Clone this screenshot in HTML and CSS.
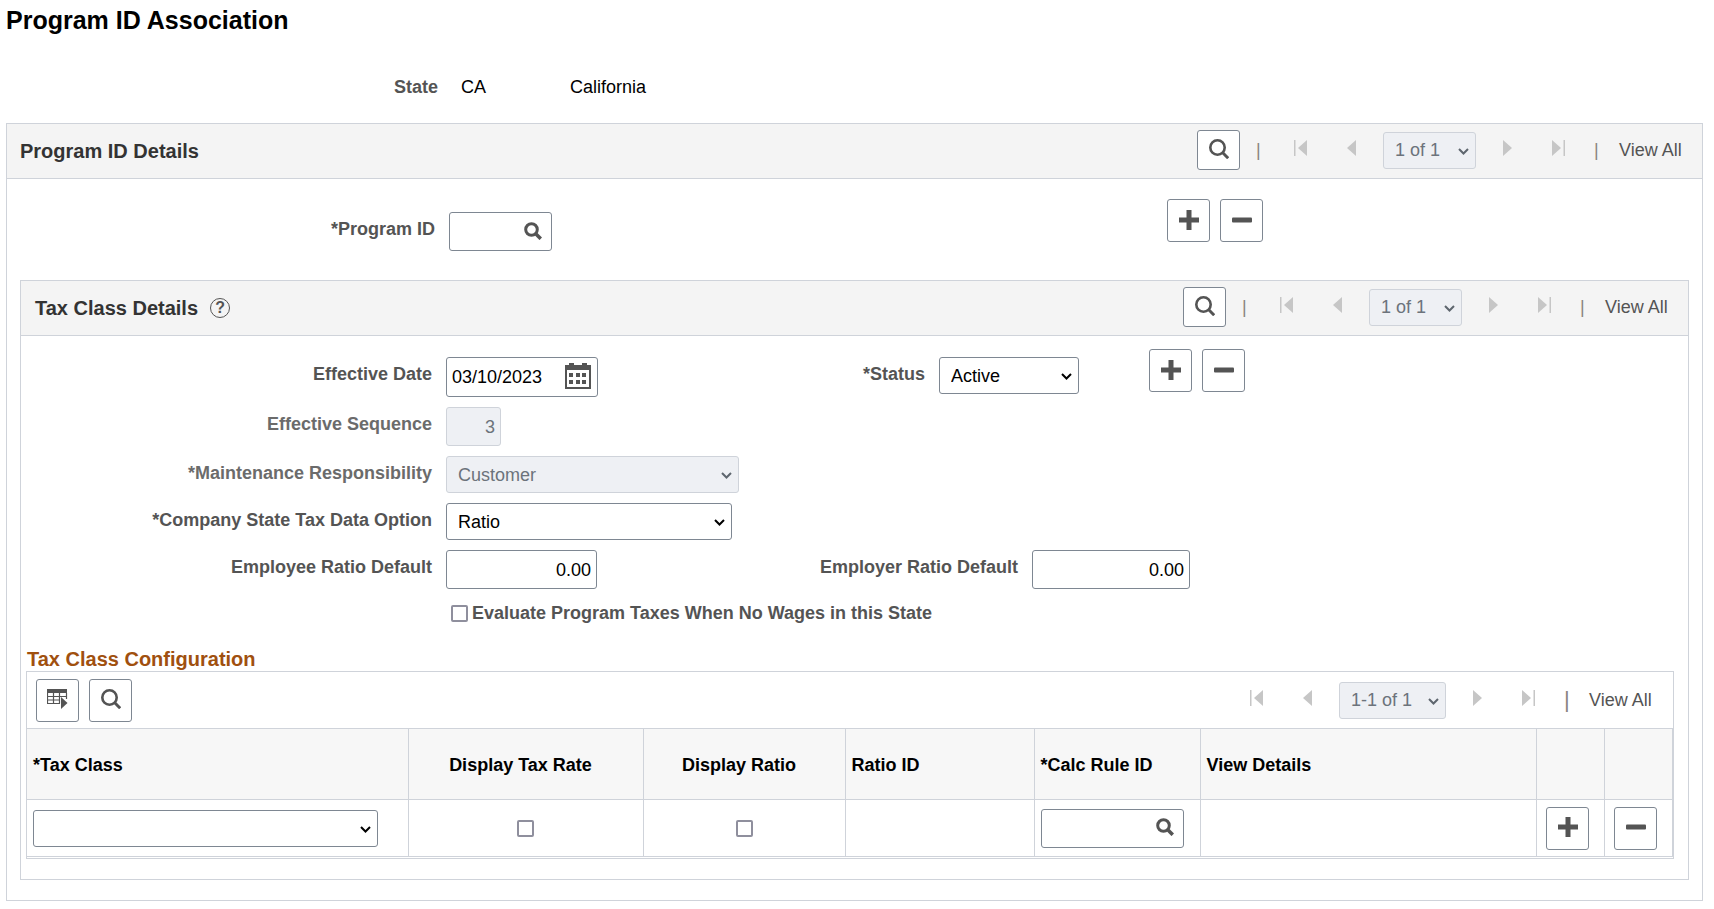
FILE: index.html
```html
<!DOCTYPE html>
<html lang="en">
<head>
    <meta charset="UTF-8">
    <meta name="viewport" content="width=device-width, initial-scale=1.0">
    <title>Program ID Association</title>
    <link rel="stylesheet" href="styles.css">
</head>
<body>
    <!-- shared icons -->
    <svg class="sprite" aria-hidden="true">
        <symbol id="i-search" viewBox="0 0 20 20"><circle cx="8.500" cy="8.500" r="7.200" fill="none" stroke="currentColor" stroke-width="2.600"/><path d="M13.500 13.500l5.700 5.700" stroke="currentColor" stroke-width="3" fill="none"/></symbol>
        <symbol id="i-lookup" viewBox="0 0 18 18"><circle cx="7.500" cy="7.500" r="5.800" fill="none" stroke="currentColor" stroke-width="3"/><path d="M11.500 11.500l5.300 5.300" stroke="currentColor" stroke-width="3.600" fill="none"/></symbol>
        <symbol id="i-plus" viewBox="0 0 20 20"><path d="M7.500 0h5v7.500H20v5h-7.500V20h-5v-7.500H0v-5h7.500z" fill="currentColor"/></symbol>
        <symbol id="i-minus" viewBox="0 0 20 20"><rect y="7.500" width="20" height="5" rx="1" fill="currentColor"/></symbol>
        <symbol id="i-first" viewBox="0 0 13 16"><path d="M0 0h1.500v16H0zM13 0v16L4 8z" fill="currentColor"/></symbol>
        <symbol id="i-prev" viewBox="0 0 9 16"><path d="M9 0v16L0 8z" fill="currentColor"/></symbol>
        <symbol id="i-next" viewBox="0 0 9 16"><path d="M0 0v16l9-8z" fill="currentColor"/></symbol>
        <symbol id="i-last" viewBox="0 0 13 16"><path d="M11.500 0H13v16h-1.500zM0 0v16l9-8z" fill="currentColor"/></symbol>
        <symbol id="i-calendar" viewBox="0 0 26 26"><path d="M0 2h4V0h5v2h8V0h5v2h4v24H0zM2 7v17h22V7z" fill="currentColor" fill-rule="evenodd"/><path d="M4 10h4v4H4zM11 10h4v4h-4zM17 10h4v4h-4zM4 17h4v4H4zM11 17h4v4h-4zM17 17h4v4h-4z" fill="currentColor"/></symbol>
        <symbol id="i-grid" viewBox="0 0 21 20"><path d="M0 0h20v4H0z" fill="currentColor"/><path d="M.500 4v10.500H13M.500 7.500h19M.500 11H13M6.500 4v10.500M12.500 4v10.500M19.500 4v6" stroke="currentColor" stroke-width="1.200" fill="none"/><path d="M14 8l6.500 6L14 20z" fill="currentColor"/></symbol>
    </svg>

    <h1>Program ID Association</h1>
    <div class="state-line">
        <span class="label">State</span>
        <span class="state-code">CA</span>
        <span>California</span>
    </div>

    <section class="panel outer">
        <header class="panel-head">
            <h2>Program ID Details</h2>
            <div class="pager">
                <button class="icon-btn" type="button" aria-label="Find"><svg width="20" height="20"><use href="#i-search"/></svg></button>
                <span class="sep sep-find">|</span>
                <button class="nav-btn" type="button" aria-label="First" disabled><svg width="13" height="16"><use href="#i-first"/></svg></button>
                <button class="nav-btn" type="button" aria-label="Previous" disabled><svg width="9" height="16"><use href="#i-prev"/></svg></button>
                <div class="select page-select"><select aria-label="Page" disabled><option>1 of 1</option></select><svg class="chevron" viewBox="0 0 11 7"><path d="M1 1l4.500 4.500L10 1"/></svg></div>
                <button class="nav-btn" type="button" aria-label="Next" disabled><svg width="9" height="16"><use href="#i-next"/></svg></button>
                <button class="nav-btn" type="button" aria-label="Last" disabled><svg width="13" height="16"><use href="#i-last"/></svg></button>
                <span class="sep">|</span>
                <a href="#">View All</a>
            </div>
        </header>

        <div class="row program-row">
            <div class="field program-field">
                <label for="program-id">*Program ID</label>
                <div class="prompt w-program"><input type="text" id="program-id"><button type="button" aria-label="Look up Program ID"><svg width="18" height="18"><use href="#i-lookup"/></svg></button></div>
            </div>
            <div class="row-actions">
                <button class="icon-btn tall" type="button" aria-label="Add row"><svg width="20" height="20"><use href="#i-plus"/></svg></button>
                <button class="icon-btn tall" type="button" aria-label="Delete row"><svg width="20" height="20"><use href="#i-minus"/></svg></button>
            </div>
        </div>

        <section class="panel inner">
            <header class="panel-head">
                <h2>Tax Class Details</h2>
                <button class="help" type="button" aria-label="Help">?</button>
                <div class="pager">
                    <button class="icon-btn" type="button" aria-label="Find"><svg width="20" height="20"><use href="#i-search"/></svg></button>
                    <span class="sep sep-find">|</span>
                    <button class="nav-btn" type="button" aria-label="First" disabled><svg width="13" height="16"><use href="#i-first"/></svg></button>
                    <button class="nav-btn" type="button" aria-label="Previous" disabled><svg width="9" height="16"><use href="#i-prev"/></svg></button>
                    <div class="select page-select"><select aria-label="Page" disabled><option>1 of 1</option></select><svg class="chevron" viewBox="0 0 11 7"><path d="M1 1l4.500 4.500L10 1"/></svg></div>
                    <button class="nav-btn" type="button" aria-label="Next" disabled><svg width="9" height="16"><use href="#i-next"/></svg></button>
                    <button class="nav-btn" type="button" aria-label="Last" disabled><svg width="13" height="16"><use href="#i-last"/></svg></button>
                    <span class="sep">|</span>
                    <a href="#">View All</a>
                </div>
            </header>

            <form class="details">
                <div class="row date-row">
                    <div class="field first">
                        <label for="eff-date">Effective Date</label>
                        <div class="prompt date w-date"><input type="text" id="eff-date" value="03/10/2023"><button type="button" aria-label="Calendar"><svg width="26" height="26"><use href="#i-calendar"/></svg></button></div>
                    </div>
                    <div class="field status-field">
                        <label for="status">*Status</label>
                        <div class="select w-status"><select id="status"><option>Active</option><option>Inactive</option></select><svg class="chevron" viewBox="0 0 11 7"><path d="M1 1l4.500 4.500L10 1"/></svg></div>
                    </div>
                    <div class="row-actions">
                        <button class="icon-btn tall" type="button" aria-label="Add row"><svg width="20" height="20"><use href="#i-plus"/></svg></button>
                        <button class="icon-btn tall" type="button" aria-label="Delete row"><svg width="20" height="20"><use href="#i-minus"/></svg></button>
                    </div>
                </div>
                <div class="row">
                    <div class="field first muted">
                        <label for="eff-seq">Effective Sequence</label>
                        <input class="num w-seq" type="text" id="eff-seq" value="3" disabled>
                    </div>
                </div>
                <div class="row">
                    <div class="field first muted">
                        <label for="maint">*Maintenance Responsibility</label>
                        <div class="select w-maint"><select id="maint" disabled><option>Customer</option></select><svg class="chevron" viewBox="0 0 11 7"><path d="M1 1l4.500 4.500L10 1"/></svg></div>
                    </div>
                </div>
                <div class="row">
                    <div class="field first">
                        <label for="tax-option">*Company State Tax Data Option</label>
                        <div class="select w-option"><select id="tax-option"><option>Ratio</option></select><svg class="chevron" viewBox="0 0 11 7"><path d="M1 1l4.500 4.500L10 1"/></svg></div>
                    </div>
                </div>
                <div class="row">
                    <div class="field first">
                        <label for="ee-ratio">Employee Ratio Default</label>
                        <input class="num w-ratio" type="text" id="ee-ratio" value="0.00">
                    </div>
                    <div class="field employer-field">
                        <label for="er-ratio">Employer Ratio Default</label>
                        <input class="num w-ratio" type="text" id="er-ratio" value="0.00">
                    </div>
                </div>
                <div class="check-row">
                    <input type="checkbox" id="evaluate">
                    <label for="evaluate">Evaluate Program Taxes When No Wages in this State</label>
                </div>
            </form>

            <div class="config">
                <h3>Tax Class Configuration</h3>
                <div class="grid-box">
                    <div class="toolbar">
                        <button class="icon-btn tall" type="button" aria-label="Grid actions"><svg width="21" height="20"><use href="#i-grid"/></svg></button>
                        <button class="icon-btn tall" type="button" aria-label="Find"><svg width="20" height="20"><use href="#i-search"/></svg></button>
                        <div class="pager">
                            <button class="nav-btn" type="button" aria-label="First" disabled><svg width="13" height="16"><use href="#i-first"/></svg></button>
                            <button class="nav-btn" type="button" aria-label="Previous" disabled><svg width="9" height="16"><use href="#i-prev"/></svg></button>
                            <div class="select page-select wide"><select aria-label="Rows" disabled><option>1-1 of 1</option></select><svg class="chevron" viewBox="0 0 11 7"><path d="M1 1l4.500 4.500L10 1"/></svg></div>
                            <button class="nav-btn" type="button" aria-label="Next" disabled><svg width="9" height="16"><use href="#i-next"/></svg></button>
                            <button class="nav-btn" type="button" aria-label="Last" disabled><svg width="13" height="16"><use href="#i-last"/></svg></button>
                            <span class="sep">|</span>
                            <a href="#">View All</a>
                        </div>
                    </div>
                    <table>
                        <colgroup>
                            <col class="c-class"><col class="c-rate"><col class="c-ratio"><col class="c-ratio-id"><col class="c-rule"><col><col class="c-action"><col class="c-action">
                        </colgroup>
                        <thead>
                            <tr>
                                <th>*Tax Class</th>
                                <th class="center">Display Tax Rate</th>
                                <th class="center">Display Ratio</th>
                                <th>Ratio ID</th>
                                <th>*Calc Rule ID</th>
                                <th>View Details</th>
                                <th></th>
                                <th></th>
                            </tr>
                        </thead>
                        <tbody>
                            <tr>
                                <td><div class="select w-class"><select aria-label="Tax Class"><option></option></select><svg class="chevron" viewBox="0 0 11 7"><path d="M1 1l4.500 4.500L10 1"/></svg></div></td>
                                <td class="center"><input type="checkbox" aria-label="Display Tax Rate"></td>
                                <td class="center"><input type="checkbox" aria-label="Display Ratio"></td>
                                <td></td>
                                <td><div class="prompt w-rule"><input type="text" aria-label="Calc Rule ID"><button type="button" aria-label="Look up Calc Rule ID"><svg width="18" height="18"><use href="#i-lookup"/></svg></button></div></td>
                                <td></td>
                                <td class="action"><button class="icon-btn tall" type="button" aria-label="Add row"><svg width="20" height="20"><use href="#i-plus"/></svg></button></td>
                                <td class="action"><button class="icon-btn tall" type="button" aria-label="Delete row"><svg width="20" height="20"><use href="#i-minus"/></svg></button></td>
                            </tr>
                        </tbody>
                    </table>
                </div>
            </div>
        </section>
    </section>
</body>
</html>
```
FILE: styles.css
```css
* { box-sizing: border-box; }
body { margin: 0; padding: 4px 11px 8px 6px; background: #fff; color: #000; font-family: Arial, "Liberation Sans", sans-serif; font-size: 18px; line-height: 24px; }
input, select, button { margin: 0; font-family: inherit; font-size: 18px; }
h1, h2, h3 { margin: 0; font-weight: bold; }
h1 { font-size: 25px; line-height: 32px; }
svg { display: block; }
.sprite { position: absolute; width: 0; height: 0; }

.label, label { font-weight: bold; color: #545454; }
.state-line { display: flex; padding: 39px 0 24px; }
.state-line .label { width: 432px; text-align: right; }
.state-code { width: 109px; margin-left: 23px; }

/* panels */
.panel { border: 1px solid #cfd3da; }
.panel-head { display: flex; align-items: center; height: 55px; padding: 0 17px 0 13px; background: #f4f4f4; border-bottom: 1px solid #cfd3da; }
.panel-head h2 { font-size: 20px; color: #333; }
.panel-head .pager { padding-bottom: 2px; }
.outer { padding-bottom: 20px; }
.inner { margin: 0 13px; padding-bottom: 20px; }
.inner .panel-head { padding-left: 14px; }
.help { width: 20px; height: 20px; margin-left: 12px; padding: 0; border: 1px solid #545454; border-radius: 50%; background: none; color: #545454; font-size: 16px; font-weight: bold; line-height: 18px; }

/* pager */
.pager { display: flex; align-items: center; margin-left: auto; }
.pager a { width: 66px; color: #545454; text-decoration: none; white-space: nowrap; }
.sep { width: 5px; margin: 0 20px 0 9px; color: #8a8580; line-height: 20px; }
.sep-find { margin: 0 13px 0 16px; }
.nav-btn { padding: 0 20px 4px; border: 0; background: none; color: #c6c6c6; }
.page-select { width: 93px; margin: 0 7px; }
.page-select.wide { width: 107px; }

/* buttons */
.icon-btn { display: flex; align-items: center; justify-content: center; width: 43px; height: 40px; padding: 0 0 2px; border: 1px solid #7e8792; border-radius: 3px; background: #fff; color: #545454; }
.icon-btn.tall { height: 43px; }
.row-actions { display: flex; gap: 10px; }

/* fields */
input[type="text"] { height: 39px; padding: 2px 5px 0; border: 1px solid #7e8792; border-radius: 3px; background: #fff; color: #000; }
input.num { text-align: right; }
.select { position: relative; }
.select select { display: block; width: 100%; height: 37px; padding: 0 24px 0 11px; appearance: none; border: 1px solid #7e8792; border-radius: 3px; background: #fff; color: #000; }
.chevron { position: absolute; top: 16px; right: 7px; width: 11px; height: 7px; fill: none; stroke: #000; stroke-width: 2; pointer-events: none; }
input[type="text"]:disabled, .select select:disabled { background: #eef0f4; border-color: #cfd3da; color: #6c737b; opacity: 1; }
select:disabled + .chevron { stroke: #5e666e; }
.prompt { display: flex; height: 39px; border: 1px solid #7e8792; border-radius: 3px; background: #fff; }
.prompt input[type="text"] { flex: 1; min-width: 0; height: 100%; padding: 0 5px; border: 0; background: none; }
.prompt button { padding: 0 9px 2px; border: 0; background: none; color: #545454; }
.prompt.date { height: 40px; }
.prompt.date button { padding: 0 6px 2px; }
input[type="checkbox"] { appearance: none; width: 17px; height: 17px; border: 2px solid #8f8f9d; border-radius: 2px; background: #fff; }
.w-program { width: 103px; }
.w-date { width: 152px; }
.w-status { width: 140px; }
.w-seq { width: 55px; }
.w-maint { width: 293px; }
.w-option { width: 286px; }
.w-ratio { width: 151px; }
.employer-field .w-ratio { width: 158px; }
.w-class { width: 345px; }
.w-rule { width: 143px; }

/* form rows */
.row { display: flex; align-items: flex-start; }
.field { display: flex; align-items: flex-start; gap: 14px; }
.field label { line-height: 35px; text-align: right; }
.field.muted label { color: #6b6b6b; }
.first label { width: 411px; }
.program-row { height: 101px; padding-top: 20px; }
.program-field { width: 1160px; padding-top: 13px; }
.program-field label { width: 428px; }
.details { display: flex; flex-direction: column; gap: 10px; padding-top: 13px; }
.date-row .field { padding-top: 8px; }
.status-field { width: 551px; }
.status-field label { width: 327px; }
.employer-field label { width: 421px; }
.check-row { display: flex; align-items: center; gap: 4px; padding: 2px 0 0 430px; }

/* tax class grid */
.config { padding: 22px 14px 0 5px; }
.config h3 { padding-left: 1px; color: #a0500f; font-size: 20px; line-height: 24px; }
.grid-box { padding-bottom: 1px; border: 1px solid #cfd3da; }
.toolbar { display: flex; align-items: center; gap: 10px; height: 56px; padding: 0 18px 0 9px; }
.toolbar .sep { font-size: 22px; }
table { width: 100%; table-layout: fixed; border-collapse: collapse; }
th, td { border: 1px solid #cfd3da; padding: 0 6px; text-align: left; }
th:first-child, td:first-child { border-left: 0; }
th { height: 71px; padding-top: 2px; background: #f7f7f7; }
td { height: 57px; }
th.center { padding-right: 16px; text-align: center; }
td.center { text-align: center; }
td.center input { display: block; margin: 0 auto; }
td.action { padding: 0 9px; }
.c-class { width: 381px; }
.c-rate { width: 235px; }
.c-ratio { width: 202px; }
.c-ratio-id { width: 189px; }
.c-rule { width: 166px; }
.c-action { width: 68px; }
```
